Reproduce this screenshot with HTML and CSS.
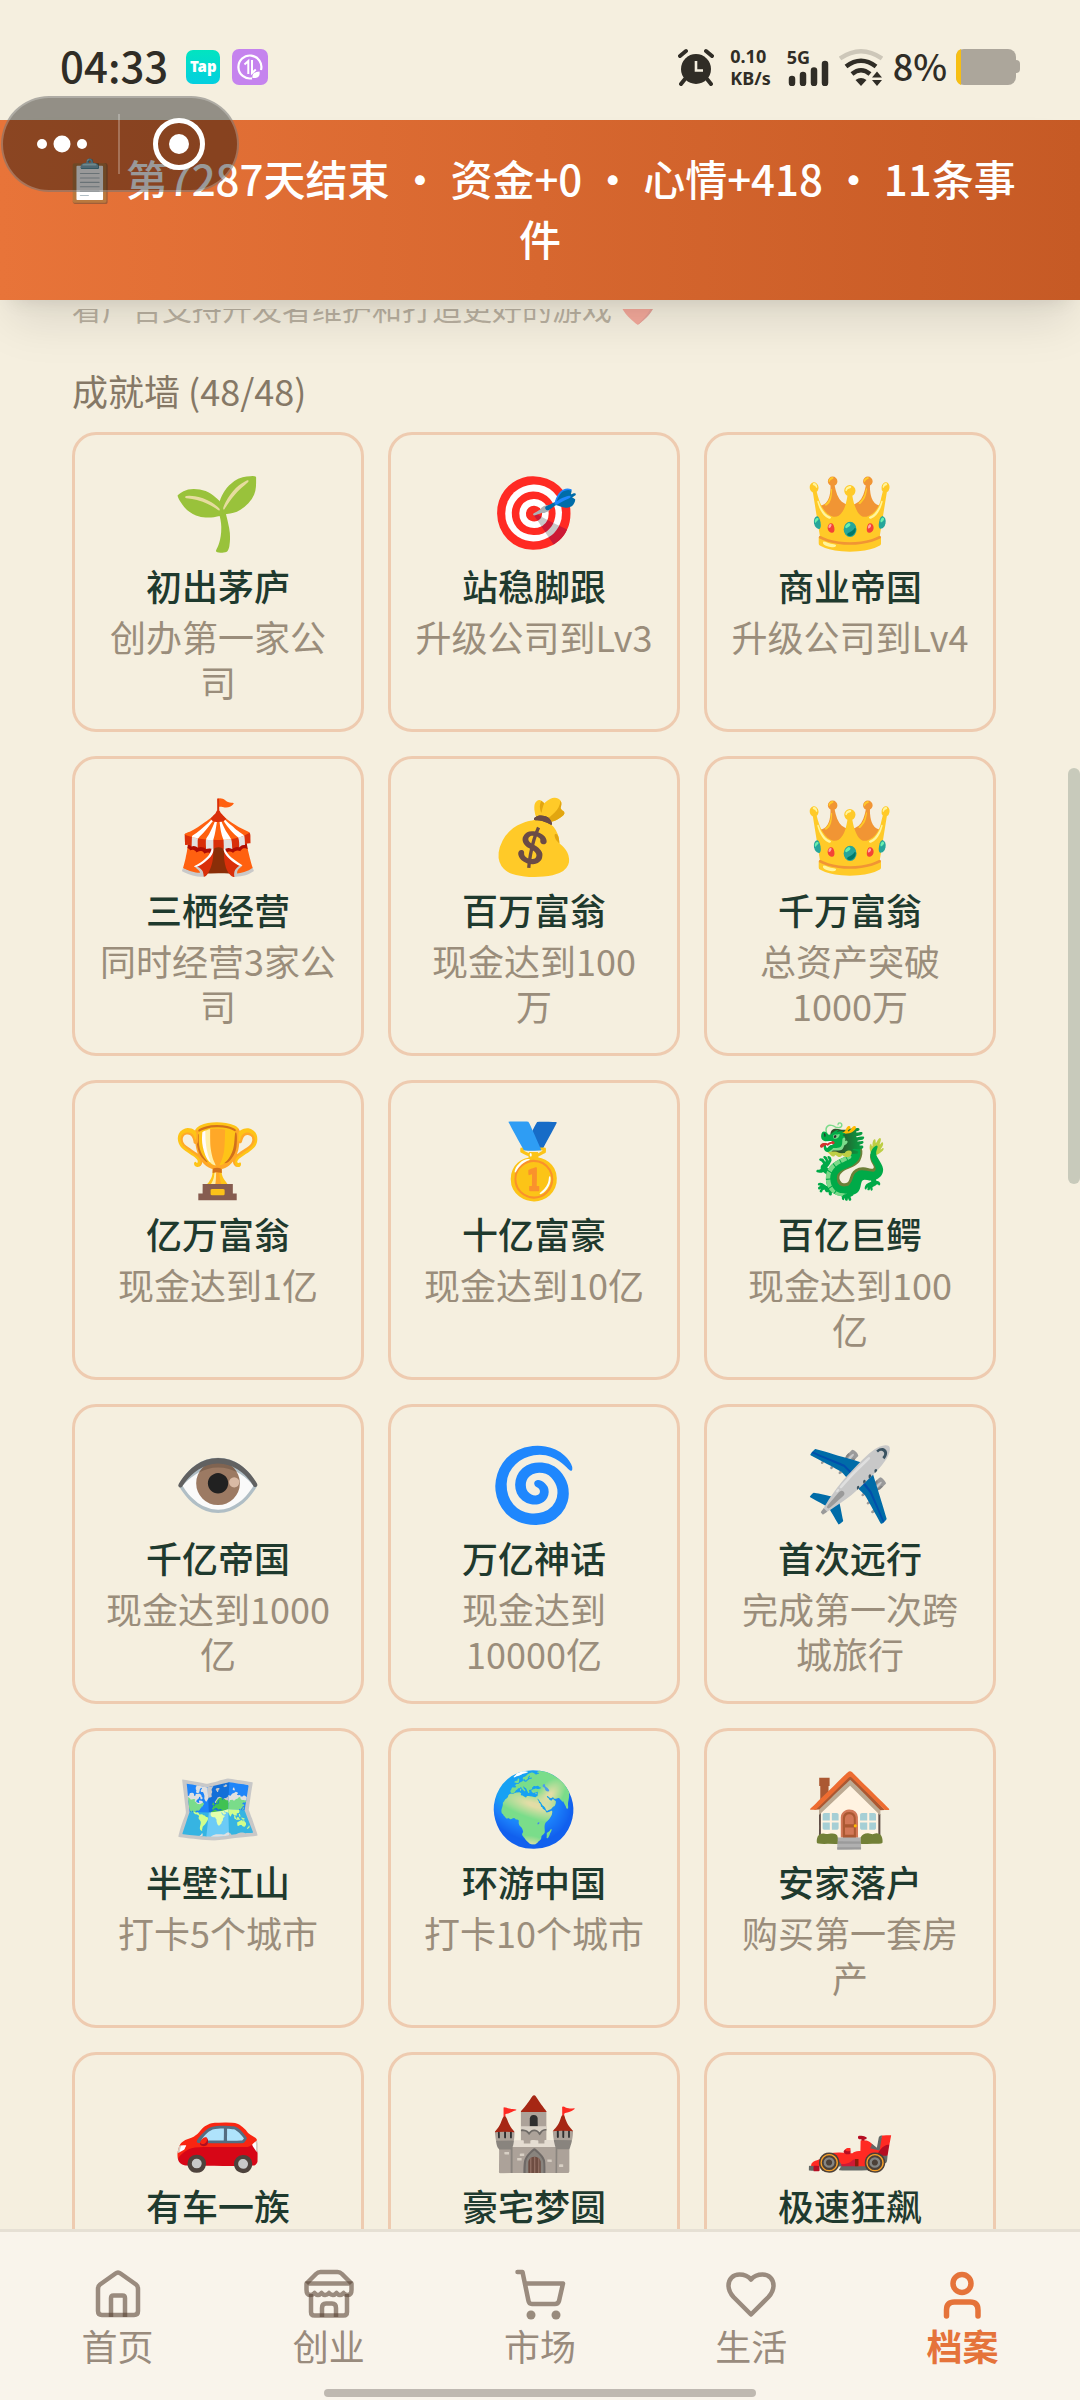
FILE: index.html
```
<!DOCTYPE html>
<html lang="zh-CN">
<head>
    <meta charset="UTF-8">
    <meta name="viewport" content="width=device-width, initial-scale=1.0">
    <title>成就墙</title>
    <link rel="stylesheet" href="styles.css">
</head>
<body>
    <div class="app">
        <!-- 状态栏 -->
        <div class="status-bar">
            <div class="status-left">
                <span class="clock">04:33</span>
                <span class="tap-icon">Tap</span>
                <svg class="data-icon" viewBox="0 0 36 36">
                    <rect width="36" height="36" rx="7" fill="#c583ee"/>
                    <path d="M20 29.300A11.500 11.500 0 1 1 29 21" fill="none" stroke="#fff" stroke-width="2.200"/>
                    <path d="M12.500 15.500l3.800-3.500v13M20 11v13l3.800-3.500" fill="none" stroke="#fff" stroke-width="2"/>
                    <path d="M20.500 29q-1-6 7-6.500q1 6-4 6.500z" fill="#fff"/>
                </svg>
            </div>
            <div class="status-right">
                <svg class="alarm-icon" viewBox="0 0 36 38">
                    <circle cx="18" cy="21" r="15" fill="#302d26"/>
                    <path d="M2 8l6-5M34 8l-6-5M7 31l-4 5M29 31l4 5" stroke="#302d26" stroke-width="4" stroke-linecap="round"/>
                    <path d="M18 13v9.500h7" fill="none" stroke="#f5efdf" stroke-width="2.600"/>
                </svg>
                <div class="net-speed">
                    <span>0.10</span>
                    <span>KB/s</span>
                </div>
                <div class="signal">
                    <span class="signal-label">5G</span>
                    <svg viewBox="0 0 42 26">
                        <path d="M5 19v4M16 15v8M27 10.500v12.500M38 4v19" stroke="#302d26" stroke-width="6.500" stroke-linecap="round"/>
                    </svg>
                </div>
                <svg class="wifi-icon" viewBox="0 0 44 38">
                    <g fill="none" stroke="#302d26" stroke-width="4.500">
                        <path d="M1 10.500Q22-4 43 10.500" stroke="#cdc7b9"/>
                        <path d="M7 18.500Q22 7 37 18.500"/>
                        <path d="M13 26Q22 18.500 31 26"/>
                    </g>
                    <path d="M16.500 32q5.500-4 11 0L22 38zM33 29.500l5-6 5 6zM33 32l5 6 5-6z" fill="#302d26"/>
                </svg>
                <span class="battery-text">8%</span>
                <svg class="battery-icon" viewBox="0 0 64 36">
                    <rect x="50" y="11" width="14" height="13" rx="4" fill="#aca69b"/>
                    <rect width="60" height="36" rx="8" fill="#aca69b"/>
                    <path d="M5 0v36Q0 34 0 28V8Q0 2 5 0z" fill="#f7bf13"/>
                </svg>
            </div>
        </div>

        <!-- 每日结算横幅 -->
        <div class="banner">📋 第7287天结束 · 资金+0 · 心情+418 · 11条事件</div>

        <main class="content">
            <p class="support-note">看广告支持开发者维护和打造更好的游戏 ❤️</p>
            <h2 class="wall-title">成就墙 (48/48)</h2>
            <div class="wall">
                <div class="card">
                    <div class="card-icon">🌱</div>
                    <div class="card-name">初出茅庐</div>
                    <div class="card-desc">创办第一家公司</div>
                </div>
                <div class="card">
                    <div class="card-icon">🎯</div>
                    <div class="card-name">站稳脚跟</div>
                    <div class="card-desc">升级公司到Lv3</div>
                </div>
                <div class="card">
                    <div class="card-icon">👑</div>
                    <div class="card-name">商业帝国</div>
                    <div class="card-desc">升级公司到Lv4</div>
                </div>
                <div class="card">
                    <div class="card-icon">🎪</div>
                    <div class="card-name">三栖经营</div>
                    <div class="card-desc">同时经营3家公司</div>
                </div>
                <div class="card">
                    <div class="card-icon">💰</div>
                    <div class="card-name">百万富翁</div>
                    <div class="card-desc">现金达到100万</div>
                </div>
                <div class="card">
                    <div class="card-icon">👑</div>
                    <div class="card-name">千万富翁</div>
                    <div class="card-desc">总资产突破1000万</div>
                </div>
                <div class="card">
                    <div class="card-icon">🏆</div>
                    <div class="card-name">亿万富翁</div>
                    <div class="card-desc">现金达到1亿</div>
                </div>
                <div class="card">
                    <div class="card-icon">🥇</div>
                    <div class="card-name">十亿富豪</div>
                    <div class="card-desc">现金达到10亿</div>
                </div>
                <div class="card">
                    <div class="card-icon">🐉</div>
                    <div class="card-name">百亿巨鳄</div>
                    <div class="card-desc">现金达到100亿</div>
                </div>
                <div class="card">
                    <div class="card-icon">👁️</div>
                    <div class="card-name">千亿帝国</div>
                    <div class="card-desc">现金达到1000亿</div>
                </div>
                <div class="card">
                    <div class="card-icon">🌀</div>
                    <div class="card-name">万亿神话</div>
                    <div class="card-desc">现金达到10000亿</div>
                </div>
                <div class="card">
                    <div class="card-icon">✈️</div>
                    <div class="card-name">首次远行</div>
                    <div class="card-desc">完成第一次跨城旅行</div>
                </div>
                <div class="card">
                    <div class="card-icon">🗺️</div>
                    <div class="card-name">半壁江山</div>
                    <div class="card-desc">打卡5个城市</div>
                </div>
                <div class="card">
                    <div class="card-icon">🌍</div>
                    <div class="card-name">环游中国</div>
                    <div class="card-desc">打卡10个城市</div>
                </div>
                <div class="card">
                    <div class="card-icon">🏠</div>
                    <div class="card-name">安家落户</div>
                    <div class="card-desc">购买第一套房产</div>
                </div>
                <div class="card">
                    <div class="card-icon">🚗</div>
                    <div class="card-name">有车一族</div>
                </div>
                <div class="card">
                    <div class="card-icon">🏰</div>
                    <div class="card-name">豪宅梦圆</div>
                </div>
                <div class="card">
                    <div class="card-icon">🏎️</div>
                    <div class="card-name">极速狂飙</div>
                </div>
            </div>
        </main>

        <!-- 底部导航 -->
        <nav class="tab-bar">
            <a class="tab" href="#home">
                <svg viewBox="0 0 54 54">
                    <path d="M7 22Q7 19 9 17.500L24.500 6.500Q27 4.500 29.500 6.500L45 17.500Q47 19 47 22V44Q47 48 43 48H11Q7 48 7 44Z"/>
                    <path d="M20 50V31Q20 28.500 22.500 28.500H31.500Q34 28.500 34 31V50"/>
                </svg>
                首页
            </a>
            <a class="tab" href="#business">
                <svg viewBox="0 0 54 54">
                    <path d="M4.500 16.500L14 7Q16 5 18.500 5H35.500Q38 5 40 7L49.500 16.500"/>
                    <path d="M4.500 16.500H49.500V23Q49.500 28 46 28Q43 28 41.500 26Q38 30 34.500 26Q31 30 27 26Q23 30 19.500 26Q16 30 12.500 26Q11 28 8 28Q4.500 28 4.500 23Z"/>
                    <path d="M9 27V45Q9 48.500 12.500 48.500H41.500Q45 48.500 45 45V27"/>
                    <path d="M20 50V41Q20 36.500 24 36.500H30Q34 36.500 34 41V50"/>
                </svg>
                创业
            </a>
            <a class="tab" href="#market">
                <svg viewBox="0 0 54 54">
                    <path d="M4.500 5H9.500L15.500 34Q16 37 19 37H42Q45 37 46 34L50 16.500H12" stroke-linecap="round"/>
                    <circle class="dot" cx="18" cy="48" r="4.500"/>
                    <circle class="dot" cx="43" cy="48" r="4.500"/>
                </svg>
                市场
            </a>
            <a class="tab" href="#life">
                <svg viewBox="0 0 54 54">
                    <path d="M27 47.500L9.500 30Q4.500 24.500 4.500 18.500C4.500 12 9 7.500 15.500 7.500C20 7.500 24 9 27 12.500C30 9 34 7.500 38.500 7.500C45 7.500 49.500 12 49.500 18.500Q49.500 24.500 44.500 30Z"/>
                </svg>
                生活
            </a>
            <a class="tab active" href="#profile">
                <svg viewBox="0 0 54 54">
                    <circle cx="27" cy="16.500" r="9"/>
                    <path d="M11.500 49V43Q11.500 35 19.500 35H35Q43 35 43 43V49" stroke-linecap="round"/>
                </svg>
                档案
            </a>
        </nav>

        <!-- 悬浮层 -->
        <div class="capsule">
            <button class="capsule-btn" type="button" aria-label="更多">
                <svg viewBox="0 0 50 18">
                    <circle cx="5" cy="9" r="5"/>
                    <circle cx="25" cy="9" r="8.500"/>
                    <circle cx="45" cy="9" r="5"/>
                </svg>
            </button>
            <button class="capsule-btn" type="button" aria-label="关闭">
                <svg class="target" viewBox="0 0 52 52">
                    <circle class="ring" cx="26" cy="26" r="23.500"/>
                    <circle cx="26" cy="26" r="10"/>
                </svg>
            </button>
        </div>
        <div class="scroll-thumb"></div>
        <div class="home-indicator"></div>
    </div>
</body>
</html>
```
FILE: styles.css
```
* {
    box-sizing: border-box;
    margin: 0;
    padding: 0;
}
body {
    font-family: "Noto Sans CJK SC", sans-serif;
    font-size: 36px;
    line-height: 45px;
    background: #f5efdf;
    color: #1f3a2e;
}
.app {
    position: relative;
    display: flex;
    flex-direction: column;
    height: 100vh;
    overflow: hidden;
}

/* 状态栏 */
.status-bar {
    display: flex;
    justify-content: space-between;
    align-items: center;
    padding: 42px 60px 28px;
    height: 120px;
    color: #302d26;
    font-weight: 500;
}
.status-left, .status-right {
    display: flex;
    align-items: center;
}
.clock {
    padding-bottom: 6px;
    font-size: 42px;
    margin-right: 18px;
}
.tap-icon {
    width: 34px;
    height: 34px;
    margin-right: 12px;
    border-radius: 7px;
    background: linear-gradient(#02e4c0, #04cfe0);
    color: #fff;
    font: 900 15px/32px "Noto Sans", sans-serif;
    text-align: center;
}
.data-icon {
    width: 36px;
    height: 36px;
}
.alarm-icon {
    width: 36px;
    height: 38px;
    margin-right: 16px;
}
.net-speed {
    display: flex;
    flex-direction: column;
    margin-right: 16px;
    font: 700 18px/22px "Noto Sans", sans-serif;
}
.signal {
    position: relative;
    display: flex;
    align-items: flex-end;
    height: 38px;
    margin-right: 10px;
}
.signal svg {
    width: 42px;
    height: 26px;
}
.signal-label {
    position: absolute;
    top: 0;
    left: 0;
    font: 700 18px/18px "Noto Sans", sans-serif;
}
.wifi-icon {
    width: 44px;
    height: 38px;
    margin-right: 10px;
}
.battery-text {
    padding-bottom: 4px;
    font-size: 36px;
    margin-right: 9px;
}
.battery-icon {
    width: 64px;
    height: 36px;
}

/* 横幅 */
.banner {
    position: relative;
    z-index: 1;
    padding: 28px 60px 32px;
    background: linear-gradient(90deg, #e87439, #c65a25);
    box-shadow: 0 30px 45px -9px rgba(0, 0, 0, 0.1), 0 12px 18px -12px rgba(0, 0, 0, 0.1);
    color: #fff;
    font-size: 42px;
    font-weight: 500;
    line-height: 60px;
    text-align: center;
}

/* 成就墙 */
.content {
    flex: 1;
    min-height: 0;
    margin-top: 9px;
    padding: 0 84px 0 72px;
    overflow: hidden;
}
.support-note {
    margin: -24px 0 38px;
    font-size: 30px;
    color: #625443;
    opacity: 0.4;
}
.wall-title {
    margin-bottom: 19px;
    font-size: 36px;
    font-weight: 400;
    color: #857866;
}
.wall {
    display: grid;
    grid-template-columns: repeat(3, 1fr);
    grid-auto-rows: 300px;
    gap: 24px;
}
.card {
    padding: 24px;
    border: 3px solid #eecbb0;
    border-radius: 24px;
    text-align: center;
}
.card-icon {
    height: 104px;
    font-size: 72px;
    line-height: 96px;
}
.card-name {
    margin-bottom: 6px;
    font-weight: 500;
}
.card-desc {
    color: #9a8d7b;
}

/* 底部导航 */
.tab-bar {
    display: flex;
    padding: 35px 12px 31px;
    border-top: 3px solid #e6e0d4;
    background: #f9f4eb;
}
.tab {
    flex: 1;
    display: flex;
    flex-direction: column;
    align-items: center;
    line-height: 48px;
    color: #998b7d;
    text-decoration: none;
}
.tab svg {
    width: 54px;
    height: 54px;
    fill: none;
    stroke: rgba(90, 69, 53, 0.6);
    stroke-width: 4.5;
    stroke-linejoin: round;
}
.tab .dot {
    fill: #998b7d;
    stroke: none;
}
.tab.active {
    color: #e5733a;
    font-weight: 700;
}
.tab.active svg {
    stroke: #e5733a;
    stroke-width: 5.5;
}

/* 悬浮层 */
.capsule {
    position: absolute;
    top: 96px;
    left: 1px;
    z-index: 2;
    display: flex;
    width: 238px;
    height: 96px;
    border: 2px solid rgba(255, 255, 255, 0.25);
    border-radius: 48px;
    background: rgba(0, 0, 0, 0.4);
}
.capsule-btn {
    flex: 1;
    display: flex;
    align-items: center;
    justify-content: center;
    border: none;
    background: none;
    cursor: pointer;
}
.capsule-btn + .capsule-btn::before {
    content: "";
    position: absolute;
    left: 115px;
    width: 2px;
    height: 60px;
    background: rgba(255, 255, 255, 0.25);
}
.capsule-btn svg {
    width: 50px;
    fill: #fff;
}
.capsule-btn .target {
    width: 52px;
}
.ring {
    fill: none;
    stroke: #fff;
    stroke-width: 5;
}
.scroll-thumb {
    position: absolute;
    top: 768px;
    right: 0;
    width: 12px;
    height: 416px;
    border-radius: 6px;
    background: #c8cabb;
}
.home-indicator {
    position: absolute;
    bottom: 3px;
    left: 50%;
    width: 432px;
    height: 8px;
    margin-left: -216px;
    border-radius: 4px;
    background: #bfb9b1;
}
```
